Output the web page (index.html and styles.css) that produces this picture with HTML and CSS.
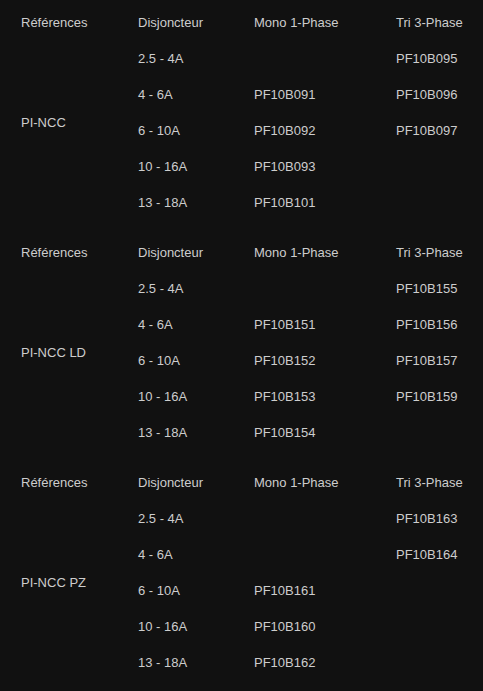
FILE: index.html
```html
<!DOCTYPE html>
<html lang="fr">
<head>
<meta charset="utf-8">
<title>Références</title>
<link rel="stylesheet" href="styles.css">
</head>
<body>
<div class="page">
  <div class="ref-table">
    <div class="cell">Références</div><div class="cell">Disjoncteur</div><div class="cell">Mono 1-Phase</div><div class="cell">Tri 3-Phase</div>
    <div class="cell name">PI-NCC</div>
    <div class="cell">2.5 - 4A</div><div class="cell"></div><div class="cell">PF10B095</div>
    <div class="cell">4 - 6A</div><div class="cell">PF10B091</div><div class="cell">PF10B096</div>
    <div class="cell">6 - 10A</div><div class="cell">PF10B092</div><div class="cell">PF10B097</div>
    <div class="cell">10 - 16A</div><div class="cell">PF10B093</div><div class="cell"></div>
    <div class="cell">13 - 18A</div><div class="cell">PF10B101</div><div class="cell"></div>
  </div>
  <div class="ref-table">
    <div class="cell">Références</div><div class="cell">Disjoncteur</div><div class="cell">Mono 1-Phase</div><div class="cell">Tri 3-Phase</div>
    <div class="cell name">PI-NCC LD</div>
    <div class="cell">2.5 - 4A</div><div class="cell"></div><div class="cell">PF10B155</div>
    <div class="cell">4 - 6A</div><div class="cell">PF10B151</div><div class="cell">PF10B156</div>
    <div class="cell">6 - 10A</div><div class="cell">PF10B152</div><div class="cell">PF10B157</div>
    <div class="cell">10 - 16A</div><div class="cell">PF10B153</div><div class="cell">PF10B159</div>
    <div class="cell">13 - 18A</div><div class="cell">PF10B154</div><div class="cell"></div>
  </div>
  <div class="ref-table">
    <div class="cell">Références</div><div class="cell">Disjoncteur</div><div class="cell">Mono 1-Phase</div><div class="cell">Tri 3-Phase</div>
    <div class="cell name">PI-NCC PZ</div>
    <div class="cell">2.5 - 4A</div><div class="cell"></div><div class="cell">PF10B163</div>
    <div class="cell">4 - 6A</div><div class="cell"></div><div class="cell">PF10B164</div>
    <div class="cell">6 - 10A</div><div class="cell">PF10B161</div><div class="cell"></div>
    <div class="cell">10 - 16A</div><div class="cell">PF10B160</div><div class="cell"></div>
    <div class="cell">13 - 18A</div><div class="cell">PF10B162</div><div class="cell"></div>
  </div>
</div>
</body>
</html>
```
FILE: styles.css
```css
html, body {
  margin: 0;
  padding: 0;
  background: #111111;
}
body {
  color: #cdcdcd;
  font-family: "Liberation Sans", Arial, sans-serif;
  font-size: 13px;
}
.page {
  padding: 4px 0 0 21px;
  display: flex;
  flex-direction: column;
  gap: 14px;
}
.ref-table {
  display: grid;
  grid-template-columns: 117px 116px 142px 1fr;
  grid-auto-rows: 36px;
  align-items: center;
}
.cell {
  white-space: nowrap;
}
.name {
  grid-column: 1;
  grid-row: 2 / span 5;
  padding-bottom: 16px;
}
```
